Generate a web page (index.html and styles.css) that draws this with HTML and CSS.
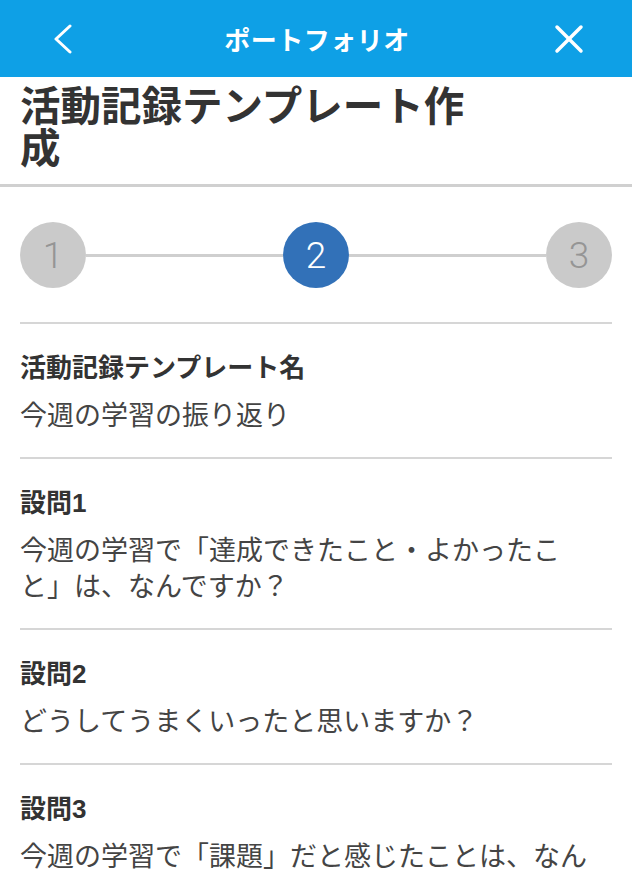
FILE: index.html
```html
<!DOCTYPE html>
<html lang="ja">
<head>
    <meta charset="UTF-8">
    <meta name="viewport" content="width=device-width, initial-scale=1.0">
    <title>ポートフォリオ</title>
    <link rel="stylesheet" href="styles.css">
</head>

<body>
    <!-- Top bar -->
    <div class="navbar">
        <button class="nav-btn back" aria-label="戻る">
            <svg width="24" height="30" viewBox="0 0 24 30">
                <polyline points="20,2 6,15 20,28" fill="none" stroke="#fff" stroke-width="3" stroke-linecap="round" stroke-linejoin="round"/>
            </svg>
        </button>
        <div class="nav-title">ポートフォリオ</div>
        <button class="nav-btn close" aria-label="閉じる">
            <svg width="30" height="30" viewBox="0 0 30 30">
                <line x1="3" y1="3" x2="27" y2="27" stroke="#fff" stroke-width="3.5" stroke-linecap="round"/>
                <line x1="27" y1="3" x2="3" y2="27" stroke="#fff" stroke-width="3.5" stroke-linecap="round"/>
            </svg>
        </button>
    </div>

    <!-- Page heading -->
    <div class="page-head">
        <h1>活動記録テンプレート作成</h1>
    </div>

    <!-- Steps -->
    <div class="steps">
        <div class="step">1</div>
        <div class="step-line"></div>
        <div class="step active">2</div>
        <div class="step-line"></div>
        <div class="step">3</div>
    </div>

    <!-- Template fields -->
    <div class="field">
        <div class="field-label">活動記録テンプレート名</div>
        <div class="field-value">今週の学習の振り返り</div>
    </div>

    <div class="field">
        <div class="field-label">設問1</div>
        <div class="field-value">今週の学習で「達成できたこと・よかったこと」は、なんですか？</div>
    </div>

    <div class="field">
        <div class="field-label">設問2</div>
        <div class="field-value">どうしてうまくいったと思いますか？</div>
    </div>

    <div class="field">
        <div class="field-label">設問3</div>
        <div class="field-value">今週の学習で「課題」だと感じたことは、なんですか？</div>
    </div>
</body>
</html>
```

FILE: styles.css
```css
/* styles.css */
body {
    font-family: "Liberation Sans", "Noto Sans CJK JP", sans-serif;
    margin: 0;
    padding: 0;
    background-color: #fff;
    color: #333;
}

.navbar {
    display: grid;
    grid-template-columns: 1fr auto 1fr;
    align-items: center;
    height: 77px;
    padding: 0 48px 0 50px;
    background-color: #0ea0e6;
}

.nav-btn {
    display: flex;
    padding: 0;
    border: none;
    background: none;
    cursor: pointer;
}

.nav-btn.close {
    justify-self: end;
}

.nav-title {
    color: #fff;
    font-size: 26px;
    font-weight: bold;
    letter-spacing: 0.5px;
}

.page-head {
    padding: 9px 20px 14px;
    border-bottom: 3px solid #d0d0d0;
}

.page-head h1 {
    max-width: 470px;
    margin: 0;
    font-size: 40.5px;
    line-height: 42px;
    font-weight: bold;
    color: #333;
}

.steps {
    display: flex;
    align-items: center;
    margin: 0 20px;
    padding: 35px 0 34px;
    border-bottom: 2px solid #d6d6d6;
}

.step {
    display: flex;
    align-items: center;
    justify-content: center;
    width: 66px;
    height: 66px;
    border-radius: 50%;
    background-color: #cacaca;
    color: #959595;
    font-family: Roboto, "Liberation Sans", sans-serif;
    font-weight: 300;
    font-size: 37px;
}

.step.active {
    background-color: #3271b8;
    color: #fff;
}

.step-line {
    flex: 1;
    height: 3px;
    background-color: #cfcfcf;
}

.field {
    margin: 0 20px;
    padding: 26px 0 23px;
    border-bottom: 2px solid #d6d6d6;
}

.field-label {
    font-size: 26px;
    line-height: 36px;
    font-weight: bold;
    color: #333;
}

.field-value {
    max-width: 575px;
    margin-top: 12px;
    font-size: 27px;
    line-height: 36px;
    color: #444;
}
```
